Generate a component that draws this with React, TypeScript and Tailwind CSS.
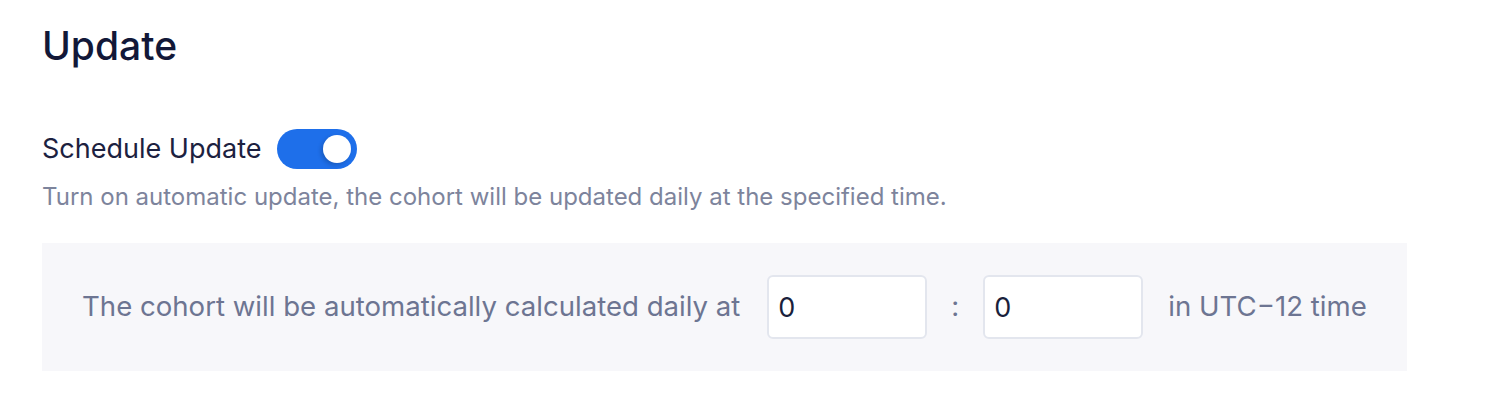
import { useState } from "react";

const font = { fontFamily: "Inter, 'Noto Sans', sans-serif" };

const Toggle = ({ on, onChange }: { on: boolean; onChange: () => void }) => (
  <button
    type="button"
    onClick={onChange}
    className={`relative flex h-[40px] w-[80px] shrink-0 items-center rounded-full px-[6px] ${
      on ? "justify-end bg-[#1e6fea]" : "justify-start bg-[#c9cdd8]"
    }`}
  >
    <span className="block h-[28px] w-[28px] rounded-full bg-white shadow-[-2px_2px_4px_rgba(0,0,0,0.18)]" />
  </button>
);

export default function App() {
  const [enabled, setEnabled] = useState(true);
  const [hour, setHour] = useState("0");
  const [minute, setMinute] = useState("0");

  return (
    <div className="min-h-[402px] bg-white pl-[42px] pt-[24px]" style={font}>
      <h1 className="text-[39px] leading-[44px] font-medium text-[#121838]">Update</h1>

      <div className="mt-[61px] flex items-center gap-[16px]">
        <span className="text-[27px] leading-[40px] text-[#1c2140]">Schedule Update</span>
        <Toggle on={enabled} onChange={() => setEnabled(!enabled)} />
      </div>

      <p className="mt-[12px] text-[24px] leading-[32px] text-[#7d849c]">
        Turn on automatic update, the cohort will be updated daily at the specified time.
      </p>

      {/* schedule time box */}
      <div className="mt-[30px] flex w-[1365px] items-center whitespace-nowrap bg-[#f7f7fa] px-[40px] py-[32px] text-[27.6px] text-[#6d7592]">
        <span className="shrink-0">The cohort will be automatically calculated daily at</span>
        <input
          value={hour}
          onChange={(e) => setHour(e.target.value)}
          className="ml-[27px] h-[64px] w-[160px] shrink-0 rounded-[6px] border-2 border-[#e3e6ee] bg-white px-[9px] text-[27px] text-[#1a1f3c] outline-none"
        />
        <span className="mx-[24px] w-[8px] shrink-0 text-center">:</span>
        <input
          value={minute}
          onChange={(e) => setMinute(e.target.value)}
          className="h-[64px] w-[160px] shrink-0 rounded-[6px] border-2 border-[#e3e6ee] bg-white px-[9px] text-[27px] text-[#1a1f3c] outline-none"
        />
        <span className="ml-[25px] shrink-0">in UTC−12 time</span>
      </div>
    </div>
  );
}
